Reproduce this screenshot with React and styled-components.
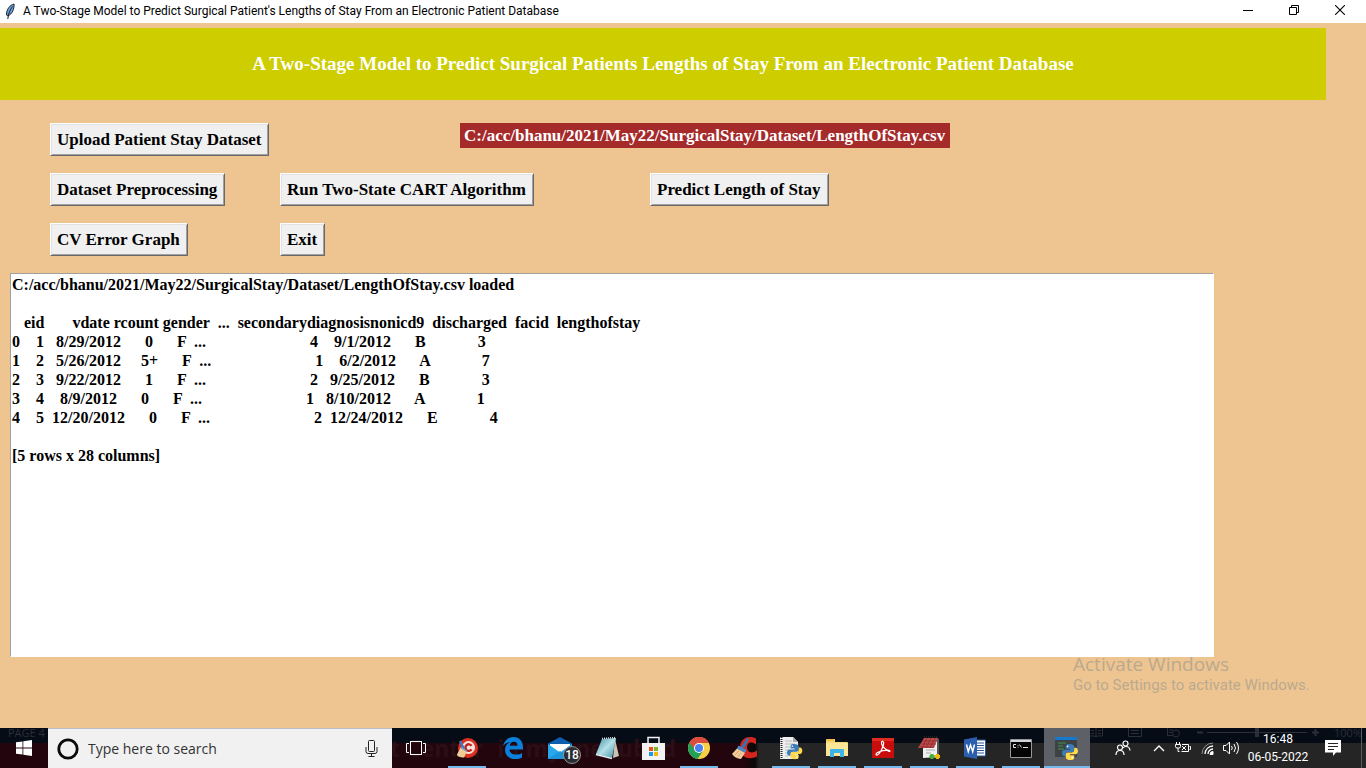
import React from 'react';
import styled, { createGlobalStyle } from 'styled-components';

const serif = '"Liberation Serif", "Times New Roman", serif';
const ui = '"Open Sans", "Segoe UI", sans-serif';
const uiNarrow = 'Roboto, "Segoe UI", sans-serif';

const GlobalStyle = createGlobalStyle`
  * { box-sizing: border-box; }
  body { margin: 0; font-family: ${ui}; }
  svg { display: block; flex: none; }
`;

const Desktop = styled.div`
  position: relative;
  display: flex;
  flex-direction: column;
  min-height: 100vh;
  background: #eec591;
`;

/* ---------- window title bar ---------- */
const TitleBar = styled.header`
  display: flex;
  align-items: center;
  height: 23px;
  padding: 0 3px 0 4px;
  background: #fff;
`;
const TitleText = styled.span`
  flex: 1;
  margin-left: 7px;
  font: 12px/23px ${uiNarrow};
  color: #000;
  white-space: nowrap;
`;
const WindowButton = styled.button`
  display: flex;
  align-items: center;
  align-self: flex-start;
  justify-content: center;
  width: 46px;
  height: 20px;
  padding: 0;
  border: 0;
  background: transparent;
`;

/* ---------- application ---------- */
const Main = styled.main`
  flex: 1;
  padding: 5px 0 71px;
`;
const Banner = styled.h1`
  display: flex;
  align-items: center;
  justify-content: center;
  min-height: 72px;
  margin: 0 40px 0 0;
  background: #cdcd00;
  color: #fff;
  font: bold 19px/24px ${serif};
`;
const Controls = styled.div`
  display: grid;
  grid-template-columns: 230px 180px 190px 1fr;
  grid-auto-rows: 33px;
  row-gap: 17px;
  margin: 23px 0 17px 50px;
`;
const TkButton = styled.button`
  grid-column: ${p => p.$col};
  justify-self: start;
  padding: 0 7px 0 6px;
  border: 1px solid;
  border-color: #fff #696969 #696969 #fff;
  box-shadow: inset 1px 1px #e3e3e3, inset -1px -1px #a0a0a0;
  background: #f0f0f0;
  color: #000;
  font: bold 17px/29px ${serif};
  white-space: nowrap;
`;
const PathLabel = styled.output`
  grid-column: 3 / span 2;
  justify-self: start;
  align-self: start;
  padding: 0 5px 0 4px;
  background: #a52a2a;
  color: #fff;
  font: bold 17px/25px ${serif};
  white-space: nowrap;
`;
const LogFrame = styled.div`
  display: flex;
  margin: 0 152px 0 10px;
`;
const Log = styled.textarea`
  flex: 1;
  min-width: 0;
  padding: 1px;
  border: 1px solid;
  border-color: #a0a0a0 #fff #fff #a0a0a0;
  border-radius: 0;
  outline: 0;
  resize: none;
  overflow: hidden;
  background: #fff;
  color: #000;
  font: bold 16px/19px ${serif};
  white-space: pre;
`;

/* ---------- activation notice ---------- */
const Notice = styled.aside`
  position: absolute;
  right: 56px;
  bottom: 73px;
  width: 237px;
  color: #bba98f;
  white-space: nowrap;
  pointer-events: none;
`;
const NoticeTitle = styled.div`
  font: 19px/22px ${ui};
`;
const NoticeText = styled.div`
  font: 15px/20px ${uiNarrow};
`;

/* ---------- task bar ---------- */
const TaskBar = styled.footer`
  position: relative;
  display: flex;
  height: 40px;
  background:
    linear-gradient(#050c16, #050c16) 0 0 / 100% 15px no-repeat,
    linear-gradient(90deg, #22050d 0 742px, #0b0808 755px, #252525 759px);
`;
const Backdrop = styled.div`
  position: absolute;
  inset: 0;
  overflow: hidden;
  color: #2a2f38;
`;
const BackdropStatus = styled.div`
  display: flex;
  align-items: center;
  height: 9px;
  padding: 0 4px 0 8px;
  font: 11px/9px ${ui};
`;
const BackdropHeading = styled.div`
  display: flex;
  gap: 14px;
  padding-left: 390px;
  color: #2b0f16;
  font: bold 23px/22px ${ui};
  white-space: pre;
`;
const Spacer = styled.div`
  flex: 1;
`;
const TaskButton = styled.button`
  position: relative;
  display: flex;
  align-items: center;
  justify-content: center;
  width: ${p => p.$w || 46}px;
  padding: 0;
  border: 0;
  background: ${p => (p.$active ? '#5d6167' : 'transparent')};
  color: #fff;
  &::after {
    content: '';
    position: absolute;
    left: ${p => (p.$active ? 0 : 4)}px;
    right: ${p => (p.$active ? 0 : 4)}px;
    bottom: 0;
    height: 2px;
    background: ${p => (p.$running || p.$active ? '#76b9ed' : 'transparent')};
  }
`;
const SearchBox = styled.label`
  position: relative;
  display: flex;
  align-items: center;
  width: 344px;
  padding: 0 14px 0 8px;
  border-top: 1px solid #b9bdc6;
  background: #f1f1f1;
`;
const SearchInput = styled.input`
  flex: 1;
  min-width: 0;
  padding: 0;
  margin-left: 8px;
  border: 0;
  outline: 0;
  background: transparent;
  font: 14px/20px ${ui};
  &::placeholder { color: #333; opacity: 1; }
`;
const Apps = styled.nav`
  display: flex;
  margin-left: 4px;
`;
const Badge = styled.span`
  position: absolute;
  right: 3px;
  bottom: 4px;
  width: 18px;
  height: 18px;
  border: 1px solid #8f9499;
  border-radius: 50%;
  background: #2a2d31;
  color: #fff;
  font: 500 12px/16px ${uiNarrow};
  text-align: center;
`;
const Tray = styled.div`
  position: relative;
  display: flex;
  margin-left: auto;
`;
const Clock = styled.time`
  width: 62px;
  margin-left: 4px;
  padding-top: 2px;
  color: #fff;
  font: 12px/18px ${uiNarrow};
  text-align: center;
  white-space: pre-line;
`;
const ShowDesktop = styled.button`
  width: 5px;
  margin-left: 4px;
  padding: 0;
  border: 0;
  border-left: 1px solid #5a5a5a;
  background: transparent;
`;

/* ---------- drawings ---------- */
const line = { fill: 'none', stroke: 'currentColor' };

const Feather = () => (
  <svg width="12" height="17" viewBox="0 0 12 17">
    <path d="M10 1C6 2 2.500 6 2.500 12l1.500 1C8 11 10.500 6 10 1z" fill="#6ea3dc" stroke="#16202e" />
    <path d="M8.500 3.500C6 7 4.500 10 3.800 16" fill="none" stroke="#16202e" />
  </svg>
);
const Minimize = () => (
  <svg width="10" height="10"><path d="M0 5.500h10" stroke="#000" /></svg>
);
const Restore = () => (
  <svg width="10" height="10" fill="none" stroke="#000"><path d="M.5 2.500h7v7h-7zM2.500 2.500v-2h7v7h-2" /></svg>
);
const Close = () => (
  <svg width="10" height="10"><path d="M0 0l10 10M10 0L0 10" stroke="#000" strokeWidth="1.100" /></svg>
);
const WindowsLogo = () => (
  <svg width="16" height="16" viewBox="0 0 16 16" fill="#fff">
    <path d="M0 2.300l6.500-.9v6.200H0zM7.300 1.300L16 0v7.600H7.300zM0 8.400h6.500v6.200L0 13.700zM7.300 8.400H16V16l-8.700-1.300z" />
  </svg>
);
const Cortana = () => (
  <svg width="24" height="24"><circle cx="12" cy="12" r="9.200" fill="none" stroke="#0a0a0a" strokeWidth="2.800" /></svg>
);
const Mic = () => (
  <svg width="13" height="18" fill="none" stroke="#222">
    <rect x="3.500" y=".5" width="6" height="11" rx="1" /><path d="M1 7v4.500q0 2 2 2h7q2 0 2-2V7M6.500 13.500V17M3.500 16.500h6" />
  </svg>
);
const TaskView = () => (
  <svg width="20" height="16" {...line}>
    <rect x="4.500" y="1.500" width="11" height="13" /><path d="M3 3.500H.5v9H3M17 3.500h2.500v9H17" />
  </svg>
);
const RedBroom = () => (
  <svg width="24" height="24" viewBox="0 0 24 24">
    <circle cx="13" cy="12" r="10" fill="#d9301f" /><circle cx="13.500" cy="11.500" r="6.500" fill="#f5e4df" />
    <path d="M16.500 9.800a3.300 3.300 0 1 0 0 3.600" fill="none" stroke="#c32018" strokeWidth="2.400" />
    <path d="M5 5l4 8" stroke="#3b79c4" strokeWidth="2.400" />
    <path d="M5.500 11.500l6.500 4-3 6c-4 0-7-1-7-3z" fill="#f0cb93" /><path d="M6 11.500l6 4" stroke="#6aa3d8" strokeWidth="1.500" />
  </svg>
);
const Edge = () => (
  <svg width="22" height="24" viewBox="0 0 22 24">
    <path d="M1 10.500C2 4.500 6.500 1 11.500 1 17.500 1 21 5.500 21 11v2.500H7.500c.2 3.500 3 5 6.500 5 2.500 0 4.500-.7 6-1.600v4.600c-2 1-4 1.500-7 1.500-6 0-10-3.800-10-9 0-4 2-6.500 5.500-8C4.500 6.700 2.500 8 1 10.500zM7.700 9.700h7.800c0-2.500-1.300-4-3.700-4-2.300 0-3.800 1.700-4.100 4z" fill="#0a7fdc" />
  </svg>
);
const Mail = () => (
  <svg width="24" height="24" viewBox="0 0 24 24">
    <path d="M0 7.500L12 1l12 6.500V9H0z" fill="#0d5fae" /><path d="M2 8h20v8H2z" fill="#fff" />
    <path d="M0 8l12 8.500L24 8v15H0z" fill="#26a8ea" /><path d="M0 23l12-8 12 8z" fill="#1c95dc" />
  </svg>
);
const Notebook = () => (
  <svg width="24" height="24" viewBox="0 0 24 24">
    <defs><linearGradient id="note" x1="0" y1="0" x2="1" y2="1"><stop offset="0" stopColor="#3f8ea4" /><stop offset=".5" stopColor="#b4e0e8" /><stop offset="1" stopColor="#3f8fa5" /></linearGradient></defs>
    <path d="M20 3l4 17-6 2z" fill="#c9c3b1" /><path d="M7 3l14-1-4 20-16-4z" fill="url(#note)" />
    <path d="M1 18.500l16 4" stroke="#dff0f2" strokeWidth="1.500" /><path d="M7 2.500l14-1" stroke="#ddd" strokeWidth="1.500" strokeDasharray="1 1" />
  </svg>
);
const Store = () => (
  <svg width="24" height="24" viewBox="0 0 24 24">
    <path d="M7 8V1.500h11V8" fill="none" stroke="#f2f2f2" strokeWidth="1.500" /><path d="M1 7h23v17H1z" fill="#f2f2f2" />
    <path d="M8 11h4v4H8z" fill="#e5511f" /><path d="M13 11h4v4h-4z" fill="#7eb72b" /><path d="M8 16h4v4H8z" fill="#1a9ae0" /><path d="M13 16h4v4h-4z" fill="#f7b70a" />
  </svg>
);
const Chrome = () => (
  <svg width="22" height="22" viewBox="0 0 22 22">
    <circle cx="11" cy="11" r="11" fill="#f8cf45" />
    <path d="M11 11L1.470 5.500A11 11 0 0 0 9.500 21.900L15 14z" fill="#21a05a" />
    <path d="M1.470 5.500A11 11 0 0 1 20.900 6H11L7 13z" fill="#dd4b3e" />
    <circle cx="11" cy="11" r="5" fill="#fff" /><circle cx="11" cy="11" r="4" fill="#4a80ef" />
  </svg>
);
const CCleaner = () => (
  <svg width="26" height="24" viewBox="0 0 26 24">
    <path d="M24 8.500V2.500C15-1.500 8 3 8 12s8 12.500 17 8.500v-6c-5 3.500-10 2-10-3S19 5 24 8.500z" fill="#d4261c" />
    <path d="M15 2l2 1-5 9-3-1z" fill="#2d76bd" /><path d="M6.500 9.500l8 4.500-1.500 3L5 12.500z" fill="#4589c8" />
    <path d="M5 12.500l8 4.500-4 6c-4-.5-7-2-9-5z" fill="#f3cc9a" /><path d="M3 19l4-4M6 21l3-4" stroke="#d3a878" />
  </svg>
);
const PythonMark = ({ s = 1, x = 0, y = 0 }) => (
  <g transform={`translate(${x} ${y}) scale(${s})`}>
    <path d="M8 0C4 0 4 2 4 3v2h4.500v1H2.500C1 6 0 7.500 0 9.500S1 13 2.500 13H4v-2q0-2.500 2.500-2.500H11q2 0 2-2V3c0-2-2-3-5-3z" fill="#3b7cb8" />
    <path d="M9 17c4 0 4-2 4-3v-2H8.500v-1h6c1.500 0 2.500-1.500 2.500-3.500S16 4 14.500 4H13v2.500Q13 9 10.500 9H6q-2 0-2 2v3c0 2 2 3 5 3z" fill="#ffd84b" />
    <circle cx="6" cy="2.500" r=".9" fill="#fff" /><circle cx="11" cy="14.500" r=".9" fill="#fff" />
  </g>
);
const PythonFile = () => (
  <svg width="24" height="24" viewBox="0 0 24 24">
    <path d="M1 1h13l5 5v17H1z" fill="#eee" /><path d="M14 1v5h5z" fill="#aaa" />
    <path d="M2.500 1v22" stroke="#222" strokeWidth="2" strokeDasharray="1 1" />
    <path d="M6 5h7M6 8h10M6 11h5M6 14h4M6 17h3M6 20h3" stroke="#bbb" />
    <PythonMark x={8} y={8} s={0.9} />
  </svg>
);
const Explorer = () => (
  <svg width="22" height="18" viewBox="0 0 22 18">
    <path d="M0 1q0-1 1-1h8v3h12q1 0 1 1v13H0z" fill="#f7d774" /><path d="M0 4h22v13H0z" fill="#fde596" /><path d="M1 1h7" stroke="#f0a61e" />
    <path d="M4 18v-7q0-1 1-1h12q1 0 1 1v7h-4v-4H8v4z" fill="#3cb4ea" />
  </svg>
);
const Acrobat = () => (
  <svg width="22" height="20" viewBox="0 0 22 20">
    <path d="M0 0h22v20H0z" fill="#c90d0d" /><path d="M0 0h22v3H0z" fill="#e02a22" />
    <path d="M4 16.500c0-3 14-6 14-3.500 0 2-8.500-4-8.500-8 0-3 3-2 2 1.500-1 4-4 10-6 10.500-1 .3-1.500 0-1.500-.5z" fill="none" stroke="#fff" strokeWidth="1.200" />
  </svg>
);
const NotePlus = () => (
  <svg width="24" height="24" viewBox="0 0 24 24">
    <path d="M6 8l15-5v18l-15 1z" fill="#efefef" /><path d="M20 2l2 1v16h-2z" fill="#555" />
    <path d="M7 2h14l-4 10H1z" fill="#c0494a" /><path d="M6 5h14M4.500 8H19M3 11h14M10 2l-5 10M14 2L9 12M18 2l-5 10" stroke="#7c2529" strokeWidth=".6" />
    <path d="M7 1h14" stroke="#222" strokeWidth="2" strokeDasharray="1 1" /><path d="M9 14h9M9 17h5" stroke="#aaa" />
    <path d="M15 18v5M12.500 20.500h5" stroke="#42b13a" strokeWidth="3" /><path d="M20.500 18v5M18 20.500h5" stroke="#efb60c" strokeWidth="3" />
  </svg>
);
const Word = () => (
  <svg width="22" height="22" viewBox="0 0 22 22">
    <path d="M11 3h10.500v16H11z" fill="#fff" stroke="#2b579a" /><path d="M13 6h7M13 8.500h7M13 11h7M13 13.500h7M13 16h7" stroke="#2b579a" />
    <path d="M0 2.500L13 0v22L0 19.500z" fill="#2b5fad" /><path d="M2.500 7.500l1.800 7L6.500 8l2.200 6.500 1.800-7" fill="none" stroke="#fff" strokeWidth="1.500" />
  </svg>
);
const Console = () => (
  <svg width="22" height="19" viewBox="0 0 22 19">
    <path d="M.5.500h21v18H.5z" fill="#050505" stroke="#999" /><path d="M1 1h20v2H1z" fill="#cfd4d8" />
    <path d="M6 5.500H3.500v3H6M8 6v.8M8 7.800v.8M9.500 5.500l2 3M13 8.500h5" fill="none" stroke="#ddd" />
  </svg>
);
const PythonWindow = () => (
  <svg width="24" height="24" viewBox="0 0 24 24">
    <path d="M0 1h22v20H0z" fill="#3d4246" /><path d="M0 1h22v3H0z" fill="#1479cf" /><path d="M3 7h8M3 10h5M3 13h6" stroke="#3f7a49" strokeWidth="1.500" />
    <PythonMark x={7} y={8} s={0.94} />
  </svg>
);
const People = () => (
  <svg width="16" height="16" viewBox="0 0 16 16" {...line} strokeWidth="1.200">
    <circle cx="5" cy="7.500" r="2.500" /><path d="M1 15q0-4.500 4-4.500T9 15" /><circle cx="10.500" cy="3.500" r="2.500" /><path d="M8 8q1-1.500 3-1.500 3.500 0 4 4" />
  </svg>
);
const Chevron = () => (
  <svg width="12" height="8" {...line} strokeWidth="1.400"><path d="M1 7l5-5 5 5" /></svg>
);
const Battery = () => (
  <svg width="16" height="12" viewBox="0 0 16 12" {...line}>
    <path d="M1.500 0v2M4.500 0v2M.5 2.500h5v2q0 1.500-1.500 1.500H2Q.5 6 .5 4.500zM3 6v3.500h1.500M7 2.500h6.500v7h-7M14.500 4.500h1v3h-1M7 4l4 4M11 4L7 8" />
  </svg>
);
const Wifi = () => (
  <svg width="13" height="13" viewBox="0 0 13 13" {...line}>
    <path d="M1 12A11 11 0 0 1 12 1" stroke="#8d8d8d" /><path d="M4 12a8 8 0 0 1 8-8M7 12a5 5 0 0 1 5-5" strokeWidth="1.300" /><path d="M9 12.500a3 3 0 0 1 3-3v3z" fill="#fff" />
  </svg>
);
const Volume = () => (
  <svg width="17" height="14" viewBox="0 0 17 14" {...line}>
    <path d="M.5 4.500H3L6.500 1v12L3 9.500H.5zM8.500 5q1.500 2 0 4M11 3q3 4 0 8M13.500 1q4 6 0 12" />
  </svg>
);
const Notification = () => (
  <svg width="16" height="16" viewBox="0 0 16 16">
    <path d="M0 0h16v12.500h-5L8 16v-3.500H0z" fill="#fff" /><path d="M3 3.500h10M3 6.500h10M3 9.500h6" stroke="#252525" />
  </svg>
);
const StatusTools = () => (
  <svg width="294" height="10" viewBox="0 0 294 10" fill="none" stroke="currentColor">
    <path d="M49.500 0v8h5.500l1 1 1-1h5.500V0M56 0v9M51 2.500h3M58 2.500h3M51 5.500h3M58 5.500h3M88.500 0v8.500h13V0M91 2.500h8M91 5.500h8M127.500 0v7.500h5M129 2h4M129 4.500h3M167 4.500h100" />
    <circle cx="136" cy="5.500" r="3.500" /><path d="M157 4.500h6M272 4.500h7M275.500 1v7" strokeWidth="2" /><path d="M217 0v9" strokeWidth="4" />
  </svg>
);

const apps = [
  { name: 'CCleaner Browser', Icon: RedBroom, running: true },
  { name: 'Microsoft Edge', Icon: Edge },
  { name: 'Mail', Icon: Mail, width: 48, badge: 18 },
  { name: 'Notepad', Icon: Notebook },
  { name: 'Microsoft Store', Icon: Store },
  { name: 'Google Chrome', Icon: Chrome, running: true },
  { name: 'CCleaner', Icon: CCleaner },
  { name: 'Python File', Icon: PythonFile, running: true },
  { name: 'File Explorer', Icon: Explorer, running: true },
  { name: 'Acrobat Reader', Icon: Acrobat, running: true },
  { name: 'Editor', Icon: NotePlus, running: true },
  { name: 'Word', Icon: Word, running: true },
  { name: 'Command Prompt', Icon: Console, running: true },
  { name: 'Python', Icon: PythonWindow, active: true },
];
const trayItems = [
  { name: 'People', Icon: People, width: 48 },
  { name: 'Show hidden icons', Icon: Chevron, width: 24 },
  { name: 'Battery', Icon: Battery, width: 24 },
  { name: 'Network', Icon: Wifi, width: 24 },
  { name: 'Volume', Icon: Volume, width: 24 },
];

const path = 'C:/acc/bhanu/2021/May22/SurgicalStay/Dataset/LengthOfStay.csv';
const sp = n => ' '.repeat(n);
const patients = [
  ['0', '1', '8/29/2012', '0', 'F', '4', '9/1/2012', 'B', '3'],
  ['1', '2', '5/26/2012', '5+', 'F', '1', '6/2/2012', 'A', '7'],
  ['2', '3', '9/22/2012', '1', 'F', '2', '9/25/2012', 'B', '3'],
  ['3', '4', '8/9/2012', '0', 'F', '1', '8/10/2012', 'A', '1'],
  ['4', '5', '12/20/2012', '0', 'F', '2', '12/24/2012', 'E', '4'],
];
const widths = [1, 5, 12, 7, 7, 27, 12, 7, 14];
const formatRow = row =>
  row.map((v, i) => (i === 5 ? '  ...' : '') + v.padStart(widths[i])).join('');
const log = [
  `${path} loaded`,
  '',
  `${sp(3)}eid${sp(7)}vdate rcount gender  ...  secondarydiagnosisnonicd9  discharged  facid  lengthofstay`,
  ...patients.map(formatRow),
  '',
  '[5 rows x 28 columns]',
].join('\n');

export default function App() {
  return (
    <Desktop>
      <GlobalStyle />
      <TitleBar>
        <Feather />
        <TitleText>A Two-Stage Model to Predict Surgical Patient's Lengths of Stay From an Electronic Patient Database</TitleText>
        <WindowButton aria-label="Minimize"><Minimize /></WindowButton>
        <WindowButton aria-label="Restore"><Restore /></WindowButton>
        <WindowButton aria-label="Close"><Close /></WindowButton>
      </TitleBar>

      <Main>
        <Banner>A Two-Stage Model to Predict Surgical Patients Lengths of Stay From an Electronic Patient Database</Banner>
        <Controls>
          <TkButton $col="1">Upload Patient Stay Dataset</TkButton>
          <PathLabel>{path}</PathLabel>
          <TkButton $col="1">Dataset Preprocessing</TkButton>
          <TkButton $col="2 / span 2">Run Two-State CART Algorithm</TkButton>
          <TkButton $col="4">Predict Length of Stay</TkButton>
          <TkButton $col="1">CV Error Graph</TkButton>
          <TkButton $col="2">Exit</TkButton>
        </Controls>
        <LogFrame>
          <Log aria-label="Output" rows={20} readOnly spellCheck={false} value={log} />
        </LogFrame>
        <Notice>
          <NoticeTitle>Activate Windows</NoticeTitle>
          <NoticeText>Go to Settings to activate Windows.</NoticeText>
        </Notice>
      </Main>

      <TaskBar>
        <Backdrop aria-hidden="true">
          <BackdropStatus>
            <span>PAGE 4</span>
            <Spacer />
            <StatusTools />
            <span>100%</span>
          </BackdropStatus>
          <BackdropHeading>
            <span>t Center</span>
            <span>in my</span>
            <span>ne</span>
            <span>ub</span>
            <span>d</span>
          </BackdropHeading>
        </Backdrop>
        <TaskButton $w={48} aria-label="Start"><WindowsLogo /></TaskButton>
        <SearchBox>
          <Cortana />
          <SearchInput type="text" aria-label="Search" placeholder="Type here to search" />
          <Mic />
        </SearchBox>
        <TaskButton $w={48} aria-label="Task view"><TaskView /></TaskButton>
        <Apps>
          {apps.map(({ name, Icon, width, running, active, badge }) => (
            <TaskButton key={name} aria-label={name} $w={width} $running={running} $active={active}>
              <Icon />
              {badge && <Badge>{badge}</Badge>}
            </TaskButton>
          ))}
        </Apps>
        <Tray>
          {trayItems.map(({ name, Icon, width }) => (
            <TaskButton key={name} aria-label={name} $w={width}><Icon /></TaskButton>
          ))}
          <Clock>{'16:48\n06-05-2022'}</Clock>
          <TaskButton $w={48} aria-label="Notifications"><Notification /></TaskButton>
          <ShowDesktop aria-label="Show desktop" />
        </Tray>
      </TaskBar>
    </Desktop>
  );
}
